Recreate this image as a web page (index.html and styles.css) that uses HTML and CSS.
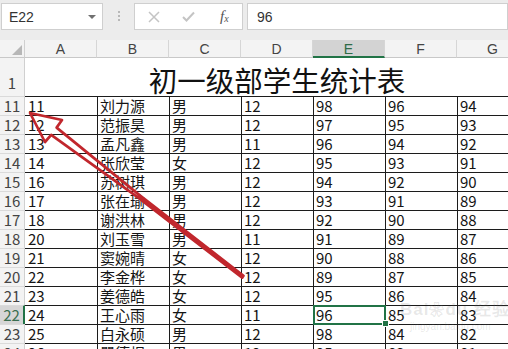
FILE: index.html
```html
<!DOCTYPE html>
<html lang="zh-CN">
<head>
    <meta charset="UTF-8">
    <title>初一级部学生统计表</title>
    <link rel="stylesheet" href="styles.css">
</head>
<body>
    <!-- Formula bar -->
    <div class="toolbar">
        <div class="namebox">
            <span>E22</span>
            <span class="caret"></span>
        </div>
        <div class="grip"><i></i><i></i><i></i></div>
        <div class="fxbox">
            <svg class="btn" width="12" height="12" viewBox="0 0 12 12">
                <path d="M1 1 L11 11 M11 1 L1 11" stroke="#c4c4c4" stroke-width="1.5" fill="none"/>
            </svg>
            <svg class="btn" width="13" height="11" viewBox="0 0 13 11">
                <path d="M1 6 L4.5 9.5 L12 1.5" stroke="#c4c4c4" stroke-width="2" fill="none"/>
            </svg>
            <span class="fx">f<sub>x</sub></span>
        </div>
        <div class="formula">96</div>
    </div>

    <!-- Sheet -->
    <div class="sheet">
        <div class="corner"></div>
        <div class="colhead">A</div>
        <div class="colhead">B</div>
        <div class="colhead">C</div>
        <div class="colhead">D</div>
        <div class="colhead selected">E</div>
        <div class="colhead">F</div>
        <div class="colhead">G</div>

        <div class="rowhead first">1</div>
        <div class="title">初一级部学生统计表</div>

        <div class="rowhead">11</div>
        <div class="cell a">11</div><div class="cell">刘力源</div><div class="cell">男</div><div class="cell">12</div><div class="cell">98</div><div class="cell">96</div><div class="cell">94</div>

        <div class="rowhead">12</div>
        <div class="cell a">12</div><div class="cell">范振昊</div><div class="cell">男</div><div class="cell">12</div><div class="cell">97</div><div class="cell">95</div><div class="cell">93</div>

        <div class="rowhead">13</div>
        <div class="cell a">13</div><div class="cell">孟凡鑫</div><div class="cell">男</div><div class="cell">11</div><div class="cell">96</div><div class="cell">94</div><div class="cell">92</div>

        <div class="rowhead">14</div>
        <div class="cell a">14</div><div class="cell">张欣莹</div><div class="cell">女</div><div class="cell">12</div><div class="cell">95</div><div class="cell">93</div><div class="cell">91</div>

        <div class="rowhead">15</div>
        <div class="cell a">16</div><div class="cell">苏树琪</div><div class="cell">男</div><div class="cell">12</div><div class="cell">94</div><div class="cell">92</div><div class="cell">90</div>

        <div class="rowhead">16</div>
        <div class="cell a">17</div><div class="cell">张在瑜</div><div class="cell">男</div><div class="cell">12</div><div class="cell">93</div><div class="cell">91</div><div class="cell">89</div>

        <div class="rowhead">17</div>
        <div class="cell a">18</div><div class="cell">谢洪林</div><div class="cell">男</div><div class="cell">12</div><div class="cell">92</div><div class="cell">90</div><div class="cell">88</div>

        <div class="rowhead">18</div>
        <div class="cell a">20</div><div class="cell">刘玉雪</div><div class="cell">男</div><div class="cell">11</div><div class="cell">91</div><div class="cell">89</div><div class="cell">87</div>

        <div class="rowhead">19</div>
        <div class="cell a">21</div><div class="cell">窦婉晴</div><div class="cell">女</div><div class="cell">12</div><div class="cell">90</div><div class="cell">88</div><div class="cell">86</div>

        <div class="rowhead">20</div>
        <div class="cell a">22</div><div class="cell">李金桦</div><div class="cell">女</div><div class="cell">12</div><div class="cell">89</div><div class="cell">87</div><div class="cell">85</div>

        <div class="rowhead">21</div>
        <div class="cell a">23</div><div class="cell">姜德皓</div><div class="cell">女</div><div class="cell">12</div><div class="cell">95</div><div class="cell">86</div><div class="cell">84</div>

        <div class="rowhead selected">22</div>
        <div class="cell a">24</div><div class="cell">王心雨</div><div class="cell">女</div><div class="cell">11</div><div class="cell active">96<span class="handle"></span></div><div class="cell">85</div><div class="cell">83</div>

        <div class="rowhead">23</div>
        <div class="cell a">25</div><div class="cell">白永硕</div><div class="cell">男</div><div class="cell">12</div><div class="cell">98</div><div class="cell">84</div><div class="cell">82</div>

        <div class="rowhead">24</div>
        <div class="cell a">26</div><div class="cell">瞿德煜</div><div class="cell">男</div><div class="cell">12</div><div class="cell">95</div><div class="cell">83</div><div class="cell">81</div>
    </div>

    <!-- annotation arrow drawn over the sheet -->
    <svg class="arrow" width="508" height="349" viewBox="0 0 508 349">
        <polygon points="30,113 62,120 56.6,127.6 139.8,195.4 243.5,275.8 242.2,277.6 138.2,197.6 51.2,134.8 45,142"
                 fill="#c1272d" fill-opacity="0" stroke="#c1272d" stroke-width="2.7" stroke-linejoin="round"/>
    </svg>

    <!-- watermark -->
    <div class="watermark">
        <span class="wm-big">Bai<span class="paw">❀</span>du 经验</span>
        <span class="wm-small">jingyan.baidu.com</span>
    </div>
</body>
</html>
```

FILE: styles.css
```css
body {
    margin: 0;
    width: 508px;
    height: 349px;
    overflow: hidden;
    position: relative;
    background: #ffffff;
    font-family: "Noto Sans CJK SC", sans-serif;
}

/* formula bar */
.toolbar {
    display: flex;
    align-items: flex-start;
    height: 40px;
    box-sizing: border-box;
    padding: 3px 0 0 1px;
    background: #ececec;
}
.namebox, .fxbox, .formula {
    height: 27px;
    box-sizing: border-box;
    background: #fff;
    border: 1px solid #cfcfcf;
    display: flex;
    align-items: center;
}
.namebox {
    width: 102px;
    padding: 0 6px 0 7px;
    justify-content: space-between;
    font: 14px "Liberation Sans", sans-serif;
    color: #333;
}
.caret {
    width: 0;
    height: 0;
    border-left: 4px solid transparent;
    border-right: 4px solid transparent;
    border-top: 4px solid #707070;
}
.grip {
    width: 31px;
    display: flex;
    flex-direction: column;
    align-items: center;
    gap: 2px;
    padding-top: 8px;
}
.grip i {
    width: 2px;
    height: 2px;
    background: #b8b8b8;
}
.fxbox {
    width: 109px;
    padding-left: 13px;
}
.fxbox .btn {
    margin-right: 22px;
}
.fx {
    font: italic 15px "Liberation Serif", serif;
    color: #555;
    margin-left: 3px;
}
.fx sub {
    font-size: 10px;
    vertical-align: -1px;
}
.formula {
    flex: 1;
    margin-left: 4px;
    padding-left: 9px;
    font: 14px "Liberation Sans", sans-serif;
    color: #333;
}

/* sheet grid */
.sheet {
    display: grid;
    grid-template-columns: 25px repeat(7, 72px);
    grid-template-rows: 18px 38px repeat(14, 19px);
    width: 529px;
}
.corner {
    background: #f3f3f3;
    border-bottom: 1px solid #c8c8c8;
    border-right: 1px solid #d0d0d0;
    position: relative;
}
.corner::after {
    content: "";
    position: absolute;
    right: 2px;
    bottom: 2px;
    border-left: 10px solid transparent;
    border-bottom: 10px solid #b7b7b7;
}
.colhead {
    background: #f3f3f3;
    border-right: 1px solid #d6d6d6;
    border-bottom: 1px solid #c8c8c8;
    font: 14px "Liberation Sans", sans-serif;
    color: #444;
    text-align: center;
    line-height: 19px;
}
.colhead.selected {
    background: #d3d3d3;
    color: #2f6b47;
    border-bottom: 2px solid #217346;
}
.rowhead {
    background: #f3f3f3;
    border-right: 1px solid #d0d0d0;
    border-top: 1px solid #dadada;
    font-size: 15px;
    color: #444;
    text-align: center;
    line-height: 18px;
}
.rowhead.first {
    border-top: none;
    line-height: 50px;
}
.rowhead.selected {
    background: #d6d6d6;
    color: #3a6e50;
    border-right: 2px solid #217346;
}
.title {
    grid-column: span 7;
    text-align: center;
    font-size: 28.5px;
    line-height: 43px;
    color: #111;
    white-space: nowrap;
}
.cell {
    border-top: 1px solid #1c1c1c;
    border-left: 1px solid #1c1c1c;
    padding-left: 2px;
    font-size: 15px;
    line-height: 18px;
    color: #151515;
    white-space: nowrap;
    overflow: hidden;
}
.cell.a {
    border-left: none;
    padding-left: 3px;
}
.cell.active {
    position: relative;
    overflow: visible;
}
.cell.active::before {
    content: "";
    position: absolute;
    left: -1px;
    top: -1px;
    right: -1px;
    bottom: -1px;
    border: 2px solid #217346;
}
.handle {
    position: absolute;
    right: -4px;
    bottom: -3px;
    width: 5px;
    height: 5px;
    background: #217346;
    border: 1px solid #fff;
}

/* overlays */
.arrow {
    position: absolute;
    left: 0;
    top: 0;
    pointer-events: none;
}
.watermark {
    position: absolute;
    left: 400px;
    top: 300px;
    display: flex;
    flex-direction: column;
    white-space: nowrap;
    color: rgba(110, 110, 110, 0.16);
    pointer-events: none;
}
.wm-big {
    font: bold 17px/20px "Liberation Sans", sans-serif;
    letter-spacing: 1px;
}
.paw {
    font-size: 15px;
}
.wm-small {
    font: 10px/14px "Liberation Sans", sans-serif;
    margin-left: 10px;
}
```
